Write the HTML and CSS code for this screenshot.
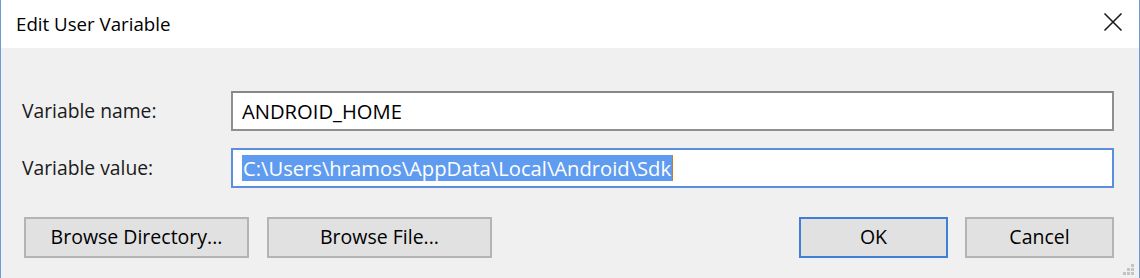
FILE: index.html
```html
<!DOCTYPE html>
<html>
<head>
<meta charset="utf-8">
<link rel="stylesheet" href="styles.css">
</head>
<body>
<div class="window">
  <div class="titlebar">
    <span class="title">Edit User Variable</span>
    <svg class="close" width="20" height="20" viewBox="0 0 20 20"><path d="M1.5 1.5 L18.5 18.5 M18.5 1.5 L1.5 18.5" stroke="#1a1a1a" stroke-width="1.6" fill="none"/></svg>
  </div>
  <div class="content">
    <div class="row">
      <span class="label">Variable name:</span>
      <div class="textbox">ANDROID_HOME</div>
    </div>
    <div class="row row2">
      <span class="label">Variable value:</span>
      <div class="textbox focused"><span class="sel">C:\Users\hramos\AppData\Local\Android\Sdk</span><span class="caret"></span></div>
    </div>
    <div class="buttons">
      <div class="group">
        <div class="btn">Browse Directory...</div>
        <div class="btn">Browse File...</div>
      </div>
      <div class="group right">
        <div class="btn small default">OK</div>
        <div class="btn small">Cancel</div>
      </div>
    </div>
  </div>
  <svg class="grip" width="14" height="14" viewBox="0 0 14 14">
    <rect x="10" y="2" width="3" height="3" fill="#c4c4c4"/>
    <rect x="6" y="6" width="3" height="3" fill="#c4c4c4"/>
    <rect x="10" y="6" width="3" height="3" fill="#c4c4c4"/>
    <rect x="2" y="10" width="3" height="3" fill="#c4c4c4"/>
    <rect x="6" y="10" width="3" height="3" fill="#c4c4c4"/>
    <rect x="10" y="10" width="3" height="3" fill="#c4c4c4"/>
  </svg>
</div>
</body>
</html>
```
FILE: styles.css
```css
* { box-sizing: border-box; }
html, body { margin: 0; padding: 0; }
body {
  font-family: "Open Sans", "Noto Sans", sans-serif;
  font-size: 19px;
  color: #1a1a1a;
  background: #f0f0f0;
}
.window {
  position: relative;
  width: 1140px;
  height: 278px;
  background: #f0f0f0;
  border-left: 1px solid #6b9ad6;
  border-right: 1px solid #6b9ad6;
}
.titlebar {
  height: 48px;
  background: #ffffff;
  display: flex;
  align-items: center;
  justify-content: space-between;
  padding: 0 16px 0 15px;
}
.title {
  font-size: 18.7px;
  color: #000;
  padding-bottom: 2px;
}
.close {
  margin-bottom: 4px;
}
.content {
  padding: 43px 25px 0 21px;
}
.row {
  display: flex;
  align-items: center;
}
.row2 { margin-top: 17px; }
.label {
  width: 209px;
  font-size: 19.3px;
  padding-bottom: 2px;
}
.textbox {
  flex: 1;
  height: 40px;
  background: #fff;
  border: 2px solid #8f8f8f;
  border-top-color: #888;
  display: flex;
  align-items: center;
  padding-left: 9px;
  font-size: 20.2px;
  color: #000;
  white-space: nowrap;
}
.textbox.focused {
  border-color: #5b8fdc;
}
.sel {
  background: #5f9cf0;
  color: #fff;
  line-height: 26px;
  padding: 0 1px;
}
.caret {
  display: inline-block;
  width: 1px;
  height: 26px;
  background: #c87a30;
}
.buttons {
  margin-top: 29px;
  display: flex;
  justify-content: space-between;
  padding-left: 2px;
}
.group {
  display: flex;
  gap: 18px;
}
.group.right { gap: 17px; }
.btn {
  width: 225px;
  height: 41px;
  background: #e1e1e1;
  border: 2px solid #b4b4b4;
  display: flex;
  align-items: center;
  justify-content: center;
  font-size: 19.5px;
  color: #000;
  padding-bottom: 2px;
}
.btn.small { width: 149px; }
.btn.default { border-color: #3f80d6; }
.grip {
  position: absolute;
  right: 4px;
  bottom: 2px;
}
```
